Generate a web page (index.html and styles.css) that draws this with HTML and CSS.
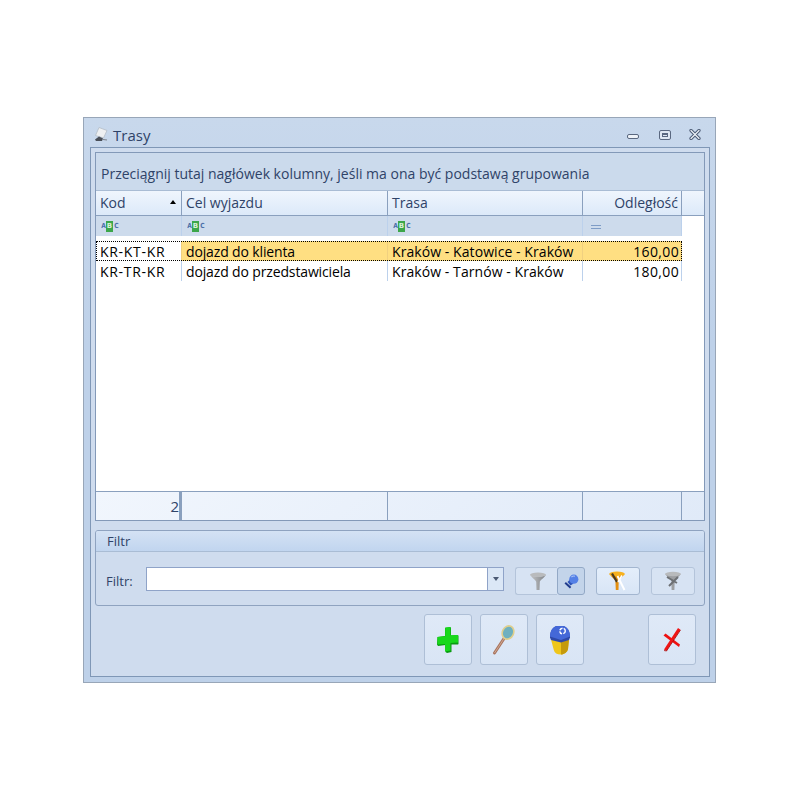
FILE: index.html
```html
<!DOCTYPE html>
<html lang="pl">
<head>
<meta charset="utf-8">
<title>Trasy</title>
<link rel="stylesheet" href="styles.css">
</head>
<body>
<div class="window">
  <div class="titlebar">
    <svg class="title-icon" width="14" height="15" viewBox="0 0 14 15"><path d="M5 .5 13 3.5 9.5 11 1.5 8.5Z" fill="#eef0f2" stroke="#b4bcc6" stroke-width=".8"/><path d="M1 12.5 5 9.5 9 11.5 8 14 2 14Z" fill="#4a4f58"/><path d="M9 12.5 13 13" stroke="#7b818a" stroke-width="1.2"/></svg>
    <span class="title">Trasy</span>
    <div class="controls">
      <span class="ctl ctl-min"></span>
      <span class="ctl ctl-max"><span class="ctl-max-inner"></span></span>
      <svg class="ctl-close" width="12" height="11" viewBox="0 0 12 11"><path d="M2 1.5 10 9.5M10 1.5 2 9.5" stroke="#4b5a74" stroke-width="3.2" stroke-linecap="round"/><path d="M2 1.5 10 9.5M10 1.5 2 9.5" stroke="#eef2f8" stroke-width="1.2" stroke-linecap="round"/></svg>
    </div>
  </div>
  <div class="panel">
    <div class="grid">
      <div class="group-hint">Przeciągnij tutaj nagłówek kolumny, jeśli ma ona być podstawą grupowania</div>
      <div class="cols head">
        <div class="cell sorted">Kod<span class="sort-arrow"></span></div>
        <div class="cell">Cel wyjazdu</div>
        <div class="cell">Trasa</div>
        <div class="cell num">Odległość</div>
        <div class="cell last"></div>
      </div>
      <div class="cols filter-row">
        <div class="cell"><span class="abc"><i>A</i><b>B</b><i>C</i></span></div>
        <div class="cell"><span class="abc"><i>A</i><b>B</b><i>C</i></span></div>
        <div class="cell"><span class="abc"><i>A</i><b>B</b><i>C</i></span></div>
        <div class="cell"><span class="eq"></span></div>
      </div>
      <div class="rows">
        <div class="cols row selected">
          <div class="cell first code">KR-KT-KR</div>
          <div class="cell goal">dojazd do klienta</div>
          <div class="cell route">Kraków - Katowice - Kraków</div>
          <div class="cell num dist">160,00</div>
        </div>
        <div class="cols row">
          <div class="cell code">KR-TR-KR</div>
          <div class="cell goal">dojazd do przedstawiciela</div>
          <div class="cell route">Kraków - Tarnów - Kraków</div>
          <div class="cell num dist">180,00</div>
        </div>
      </div>
      <div class="cols foot">
        <div class="cell num count">2</div>
        <div class="cell"></div>
        <div class="cell"></div>
        <div class="cell"></div>
        <div class="cell last"></div>
      </div>
    </div>
    <div class="filter-group">
      <div class="filter-title">Filtr</div>
      <div class="filter-body">
        <label class="filter-label">Filtr:</label>
        <div class="combo"><div class="combo-input"></div><div class="combo-btn"><span class="combo-arrow"></span></div></div>
        <div class="tool-pair">
          <div class="tool tool-a">
            <svg width="18" height="19" viewBox="0 0 18 19"><defs><linearGradient id="fg" x1="0" x2="1"><stop offset="0" stop-color="#c4c6c8"/><stop offset="1" stop-color="#7f8286"/></linearGradient></defs><path d="M1 3C4 7 7 8 7.2 10L7.5 18H10.5L10.8 10C11 8 14 7 17 3 13 5 5 5 1 3Z" fill="url(#fg)"/><ellipse cx="9" cy="2.7" rx="8" ry="2.2" fill="#b9bbbd"/></svg>
          </div>
          <div class="tool tool-b pressed">
            <svg width="15" height="15" viewBox="0 0 15 15"><path d="M1.2 8.8 6.6 13.8" stroke="#1f3a8c" stroke-width="2"/><path d="M3.5 8 6 5.5 9.5 9.5 6.5 11.5Z" fill="#2f54b8"/><circle cx="9.8" cy="5.2" r="4.6" fill="#5480e6"/><path d="M7.4 3.2a3.5 3.5 0 0 1 3.6-1" stroke="#a9c2f5" stroke-width="1.1" fill="none"/></svg>
          </div>
        </div>
        <div class="tool tool-c">
          <svg width="18" height="20" viewBox="0 0 18 20"><path d="M.5 3C3 7 6 8 6.4 10L6.8 19H9.5L9.7 10C10 8 13 7 15.5 3 12 5 4 5 .5 3Z" fill="#e48f10"/><ellipse cx="8" cy="3" rx="7.8" ry="2.4" fill="#f7b11e"/><path d="M3 2.5 8 11" stroke="#4a3a20" stroke-width="2.2"/><path d="M8.5 5 15.5 19" stroke="#fff" stroke-width="2"/><path d="M13 4.5 9 11" stroke="#fff" stroke-width="1.6"/></svg>
        </div>
        <div class="tool tool-d">
          <svg width="18" height="20" viewBox="0 0 18 20"><path d="M1 3C4 7 7 8 7.4 10L7.6 19H10.4L10.7 10C11 8 14 7 17 3 13 5 5 5 1 3Z" fill="#9c9ea1"/><ellipse cx="9" cy="3" rx="8" ry="2.2" fill="#b8babc"/><path d="M3 6 13 12M14 6 5 15" stroke="#6d7074" stroke-width="2"/></svg>
        </div>
      </div>
    </div>
    <div class="actions">
      <div class="action">
        <svg width="24" height="28" viewBox="0 0 24 28"><path d="M9 2 14 1 15 1.8V9.5L22 9 22.5 10V18L22 18.5 15.5 18.5V26L11 27 9.5 26V19L2 20 1 18.5 1.5 11 9 10Z" fill="#0a9a12"/><path d="M9.2 1.5 14.5 1V9.2L22 9V16.5L14.5 17V24.5L9 25.5V18L1.5 18.6V11L9.2 10.2Z" fill="#18d81c"/></svg>
      </div>
      <div class="action">
        <svg width="24" height="30" viewBox="0 0 24 30"><path d="M2.5 28 13 12" stroke="#a9745e" stroke-width="3" stroke-linecap="round"/><path d="M2.5 28 13 12" stroke="#d8b5a0" stroke-width=".8"/><ellipse cx="16" cy="7.5" rx="5.6" ry="6.8" transform="rotate(25 16 7.5)" fill="#6fb0bf" stroke="#e0cf8c" stroke-width="1.6"/></svg>
      </div>
      <div class="action">
        <svg width="24" height="30" viewBox="0 0 24 30"><path d="M3 14.5 13 17 21 14.5 20 24C19.5 27 16 29.5 13 29.5 9 29.5 6.5 28 5.8 25Z" fill="#efc61a"/><path d="M13 17 21 14.5 20 24C19.5 27 16 29.5 13 29.5Z" fill="#c59a0c"/><path d="M2 12.5C2 5 5.5 1.5 9 1H15C18.5 1.5 22 5 22 12.5L21 15 13 17.5 3 15Z" fill="#2f49a8"/><path d="M2 11.5C2 5 5.5 1.5 9 1H15C18.5 1.5 22 5 22 11.5L13 15Z" fill="#4468d8"/><circle cx="14.5" cy="6" r="2.8" fill="none" stroke="#fff" stroke-width="1.4" stroke-dasharray="3.5 1.2"/></svg>
      </div>
      <div class="action action-close">
        <svg width="20" height="25" viewBox="0 0 20 25"><path d="M1.5 8.5 3.5 6.5 18 17.5 17 20Z" fill="#ee1111"/><path d="M16 1 18.5 2.8 4.5 24 2 22.5Z" fill="#f01515"/><path d="M2 23.5 4.5 24 18.5 3" stroke="#a80c0c" stroke-width=".8" fill="none"/></svg>
      </div>
    </div>
  </div>
</div>
</body>
</html>
```
FILE: styles.css
```css
* { box-sizing: border-box; }
html, body { margin: 0; height: 100%; background: #fff; }
body { padding: 117px 0 0 83px; font-family: "Open Sans", "Noto Sans", sans-serif; font-size: 14px; color: #000; }

.window { width: 633px; height: 566px; border: 1px solid #98a6b8; background: linear-gradient(#c8d8ec, #bed1e9 40%, #bed1e9); display: flex; flex-direction: column; padding: 0 5px 5px 6px; }
.titlebar { height: 29px; flex: none; display: flex; align-items: center; color: #2f4368; }
.title-icon { margin: 3px 0 0 4px; }
.title { margin: 4px 0 0 5px; font-size: 15px; }
.controls { margin-left: auto; display: flex; align-items: center; margin-right: 9px; }
.ctl { display: flex; align-items: center; justify-content: center; border: 1px solid #5a6880; background: #dfe7f2; border-radius: 2px; }
.ctl-min { width: 12px; height: 5px; margin-top: 8px; background: #eef2f8; }
.ctl-max { width: 12px; height: 10px; margin-left: 20px; margin-top: 5px; }
.ctl-max-inner { width: 6px; height: 4px; border: 1px solid #5a6880; border-top-width: 2px; }
.ctl-close { margin-left: 18px; margin-top: 4px; }

.panel { flex: 1; border: 1px solid #7f97b6; background: #cfdcee; padding: 4px; display: flex; flex-direction: column; }

.grid { height: 369px; flex: none; border: 1px solid #8399b8; background: #fff; display: flex; flex-direction: column; }
.group-hint { height: 38px; flex: none; background: #cbdaec; border-bottom: 1px solid #a9bcd4; padding: 11px 0 0 5px; font-size: 14px; line-height: 20px; color: #2f4368; white-space: nowrap; }

.cols { display: grid; grid-template-columns: 86px 206px 195px 99px 22px; flex: none; }
.cell { white-space: nowrap; overflow: hidden; padding: 0 4px; border-right: 1px solid #8aa0be; }
.cell.last { border-right: 0; }
.num { text-align: right; }

.head { height: 25px; background: linear-gradient(#eff5fd, #dce9f9); border-bottom: 1px solid #8aa0be; color: #2f4368; line-height: 23px; }
.sorted { position: relative; }
.sort-arrow { position: absolute; left: 74px; top: 9px; border: 3px solid transparent; border-top: 0; border-bottom: 4px solid #000; }
.head .num { padding-right: 3px; }

.filter-row { height: 20px; grid-template-columns: 86px 206px 195px 99px; background: #cddbec; width: 586px; }
.filter-row .cell { border-right: 1px solid #bcd1ec; display: flex; align-items: center; padding-left: 5px; }
.abc { display: flex; align-items: center; gap: 1px; font-size: 7px; line-height: 9px; font-family: "DejaVu Sans", sans-serif; font-weight: 700; color: #4a6fa8; }
.abc i { font-style: normal; width: 4px; text-align: center; transform: scaleX(.85); }
.abc b { width: 7px; height: 11px; background: #3ca64a; color: #d8f0d8; text-align: center; line-height: 11px; font-size: 7px; }
.eq { margin: 1px 0 0 3px; width: 10px; height: 4px; border-top: 1px solid #7e9cc6; border-bottom: 1px solid #7e9cc6; }

.rows { flex: 1; padding-top: 5px; }
.row { height: 20px; width: 586px; grid-template-columns: 86px 206px 195px 99px; line-height: 22px; }
.row .cell { border-right: 1px solid #bcd1ec; }
.selected { background: #ffdf82; outline: 1px dotted #000; outline-offset: -1px; }
.selected .cell { border-right-color: #f0d080; }
.selected .first { background: #fff; }
.row .num { padding-right: 2px; }
.code { letter-spacing: .7px; }
.goal { letter-spacing: -.14px; }
.route { letter-spacing: .07px; }
.dist { letter-spacing: .35px; }

.foot { height: 29px; background: linear-gradient(135deg, #f1f6fd, #e0eaf8); border-top: 1px solid #8aa0be; color: #2f4368; line-height: 29px; }
.foot .count { padding-right: 2px; font-size: 15px; }
.foot .cell:first-child { box-shadow: inset -2px 0 0 #8aa0be; }

.filter-group { margin-top: 9px; height: 76px; flex: none; border: 1px solid #8fa3c0; border-radius: 3px; background: #cfdcee; }
.filter-title { height: 21px; background: linear-gradient(#d4e2f4, #c1d5ef); border-bottom: 1px solid #a9bcd4; padding-left: 11px; font-size: 13px; line-height: 20px; color: #2f4368; border-radius: 2px 2px 0 0; }
.filter-body { display: flex; align-items: flex-start; padding: 15px 0 0 10px; }
.filter-label { width: 40px; font-size: 13px; line-height: 30px; color: #2f4368; margin-top: -1px; }
.combo { width: 358px; height: 24px; display: flex; border: 1px solid #8fa3c8; background: #fff; }
.combo-input { flex: 1; }
.combo-btn { width: 16px; border-left: 1px solid #8fa3c8; background: #dbe7f6; display: flex; align-items: center; justify-content: center; }
.combo-arrow { border: 3px solid transparent; border-bottom: 0; border-top: 4px solid #4b5a74; }

.tool-pair { display: flex; margin-left: 11px; }
.tool { height: 28px; border: 1px solid #b4c4da; border-radius: 3px; display: flex; align-items: center; justify-content: center; background: #d7e3f3; }
.tool-a { width: 42px; border-radius: 3px 0 0 3px; border-right: 0; padding-left: 2px; }
.tool-b { width: 28px; }
.pressed { background: #c3d4ea; border-color: #93a9c6; }
.tool-c { width: 44px; margin-left: 11px; background: linear-gradient(#e4eefb, #d8e5f6); border-color: #a3b6d0; }
.tool-d { width: 44px; margin-left: 11px; }

.actions { display: flex; justify-content: flex-end; gap: 8px; margin-top: 8px; padding-right: 9px; }
.action { width: 48px; height: 51px; border: 1px solid #aebfd6; border-radius: 3px; background: linear-gradient(#dfe9f7, #d9e5f5); display: flex; align-items: center; justify-content: center; }
.action-close { margin-left: 56px; }
```
